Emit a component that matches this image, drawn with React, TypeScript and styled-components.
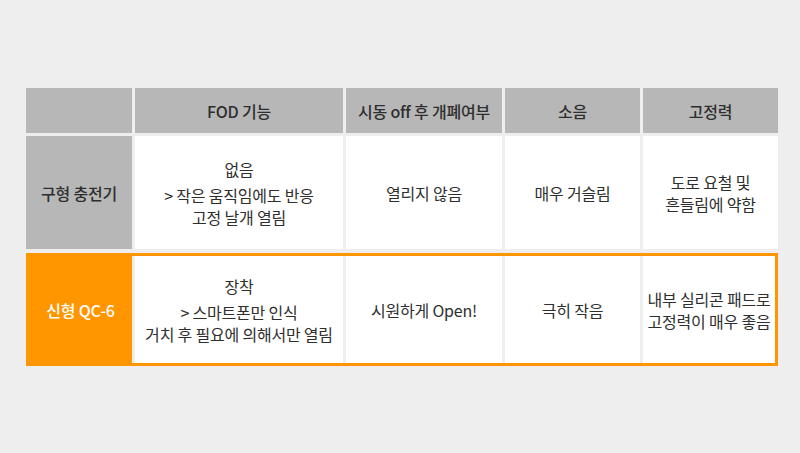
import styled, { createGlobalStyle } from 'styled-components';

const GlobalStyle = createGlobalStyle`
  html, body {
    margin: 0;
    padding: 0;
    background: #eeeeee;
  }
  body {
    font-family: 'Noto Sans CJK KR', 'Noto Sans', sans-serif;
    color: #333333;
  }
`;

type RowProps = {
  $accent?: boolean;
};

type CellProps = {
  $kind: 'head' | 'label' | 'body' | 'accent';
};

const Page = styled.div`
  width: 800px;
  height: 453px;
  padding: 88px 0 0 26px;
  box-sizing: border-box;
`;

const Table = styled.div`
  width: 752px;
  display: flex;
  flex-direction: column;
  gap: 3px;
`;

const Row = styled.div<RowProps>`
  display: grid;
  grid-template-columns: ${(p) => (p.$accent ? '103px 208px 156px 135px 132px' : '106px 208px 156px 135px 135px')};
  column-gap: 3px;
  box-sizing: border-box;
  ${(p) =>
    p.$accent &&
    `
    margin-top: 1px;
    height: 113px;
    border: 3px solid #ff9600;
    background: #eeeeee;
  `}
`;

const Cell = styled.div<CellProps>`
  display: flex;
  flex-direction: column;
  align-items: center;
  justify-content: center;
  text-align: center;
  letter-spacing: -0.2px;
  background: ${(p) => (p.$kind === 'head' || p.$kind === 'label' ? '#b7b7b7' : p.$kind === 'accent' ? '#ff9600' : '#ffffff')};
  color: ${(p) => (p.$kind === 'accent' ? '#ffffff' : '#2e2e2e')};
  font-size: 16px;
  font-weight: ${(p) => (p.$kind === 'body' ? 400 : 500)};
  height: ${(p) => (p.$kind === 'head' ? '45px' : p.$kind === 'label' ? '113px' : '100%')};
  line-height: 22px;
`;

const Lead = styled.div`
  margin-bottom: 4px;
`;

const HEAD = ['', 'FOD 기능', '시동 off 후 개폐여부', '소음', '고정력'];

const App = () => {
  return (
    <>
      <GlobalStyle />
      <Page>
        <Table>
          <Row>
            {HEAD.map((h, i) => (
              <Cell key={i} $kind="head">
                {h}
              </Cell>
            ))}
          </Row>
          <Row>
            <Cell $kind="label">구형 충전기</Cell>
            <Cell $kind="body">
              <Lead>없음</Lead>
              <div>&gt; 작은 움직임에도 반응</div>
              <div>고정 날개 열림</div>
            </Cell>
            <Cell $kind="body">열리지 않음</Cell>
            <Cell $kind="body">매우 거슬림</Cell>
            <Cell $kind="body">
              <div>도로 요철 및</div>
              <div>흔들림에 약함</div>
            </Cell>
          </Row>
          <Row $accent>
            <Cell $kind="accent">신형 QC-6</Cell>
            <Cell $kind="body">
              <Lead>장착</Lead>
              <div>&gt; 스마트폰만 인식</div>
              <div>거치 후 필요에 의해서만 열림</div>
            </Cell>
            <Cell $kind="body">시원하게 Open!</Cell>
            <Cell $kind="body">극히 작음</Cell>
            <Cell $kind="body">
              <div>내부 실리콘 패드로</div>
              <div>고정력이 매우 좋음</div>
            </Cell>
          </Row>
        </Table>
      </Page>
    </>
  );
};

export default App;
